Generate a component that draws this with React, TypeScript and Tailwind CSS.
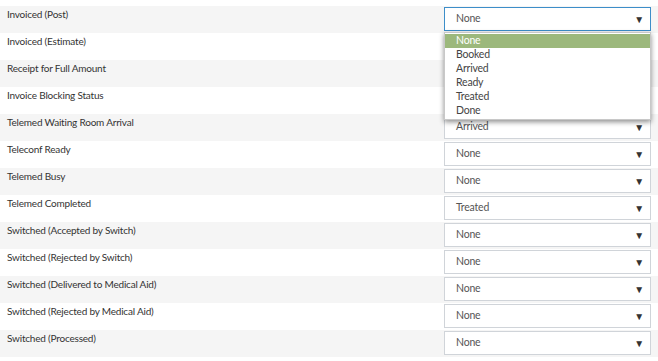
import React from "react";

const rows: { label: string; value: string }[] = [
  { label: "Invoiced (Post)", value: "None" },
  { label: "Invoiced (Estimate)", value: "None" },
  { label: "Receipt for Full Amount", value: "None" },
  { label: "Invoice Blocking Status", value: "None" },
  { label: "Telemed Waiting Room Arrival", value: "Arrived" },
  { label: "Teleconf Ready", value: "None" },
  { label: "Telemed Busy", value: "None" },
  { label: "Telemed Completed", value: "Treated" },
  { label: "Switched (Accepted by Switch)", value: "None" },
  { label: "Switched (Rejected by Switch)", value: "None" },
  { label: "Switched (Delivered to Medical Aid)", value: "None" },
  { label: "Switched (Rejected by Medical Aid)", value: "None" },
  { label: "Switched (Processed)", value: "None" },
];

const options = ["None", "Booked", "Arrived", "Ready", "Treated", "Done"];

function Select({ value, focused }: { value: string; focused?: boolean }) {
  return (
    <div
      className={
        "flex h-[24px] w-[207px] items-center justify-between border bg-white pl-[11px] pr-[6px] text-[10.5px] tracking-[-0.2px] text-[#555] " +
        (focused ? "border-[#3d8ec9]" : "border-[#d0d4d9]")
      }
    >
      <span>{value}</span>
      <span className="text-[10px] text-[#333]">▼</span>
    </div>
  );
}

export default function App() {
  return (
    <div
      className="relative w-[658px] h-[361px] overflow-hidden bg-white pt-[6px]"
      style={{ fontFamily: "Lato, 'Open Sans', sans-serif" }}
    >
      {rows.map((r, i) => (
        <div
          key={r.label}
          className={
            "flex h-[27px] items-start " + (i % 2 === 0 ? "bg-[#f5f5f5]" : "bg-white")
          }
        >
          <div className="w-[444px] pl-[7px] pt-[1px] text-[10px] leading-[14px] tracking-[-0.2px] text-[#333]">
            {r.label}
          </div>
          <div className="pt-[1px]">
            <Select value={r.value} focused={i === 0} />
          </div>
        </div>
      ))}
      <div className="absolute left-[444px] top-[32px] w-[207px] border border-[#c8c8c8] bg-white py-[1px] shadow-[0_2px_5px_rgba(0,0,0,0.45)]">
        {options.map((o, i) => (
          <div
            key={o}
            className={
              "flex h-[14px] items-center pl-[11px] text-[10.5px] tracking-[-0.2px] " +
              (i === 0 ? "bg-[#9cb87c] text-white" : "text-[#444]")
            }
          >
            {o}
          </div>
        ))}
      </div>
    </div>
  );
}
